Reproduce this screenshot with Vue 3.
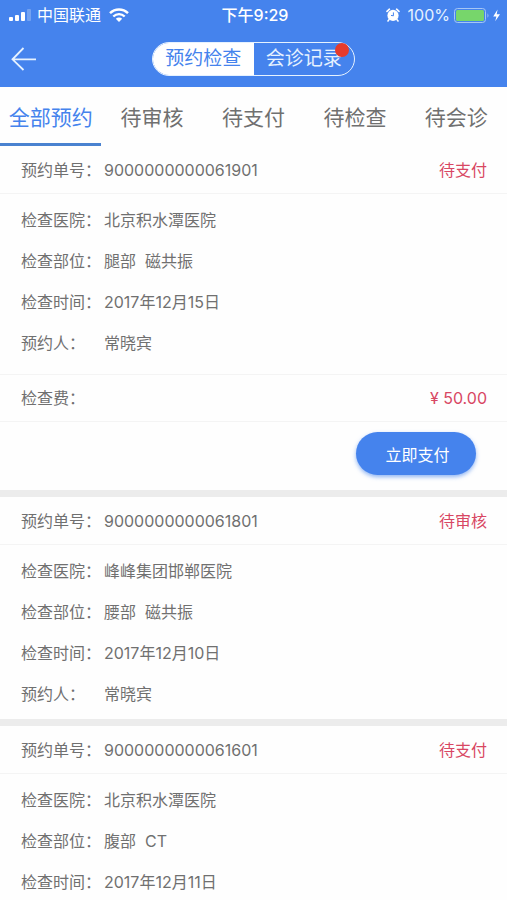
<script setup>
import { ref } from 'vue'

const view = ref('booking')
const activeTab = ref(0)
const tabs = ['全部预约', '待审核', '待支付', '待检查', '待会诊']

const orders = [
  {
    id: '9000000000061901',
    status: '待支付',
    fields: [
      ['检查医院：', '北京积水潭医院'],
      ['检查部位：', '腿部  磁共振'],
      ['检查时间：', '2017年12月15日'],
      ['预约人：', '常晓宾'],
    ],
    fee: '¥ 50.00',
  },
  {
    id: '9000000000061801',
    status: '待审核',
    fields: [
      ['检查医院：', '峰峰集团邯郸医院'],
      ['检查部位：', '腰部  磁共振'],
      ['检查时间：', '2017年12月10日'],
      ['预约人：', '常晓宾'],
    ],
  },
  {
    id: '9000000000061601',
    status: '待支付',
    fields: [
      ['检查医院：', '北京积水潭医院'],
      ['检查部位：', '腹部  CT'],
      ['检查时间：', '2017年12月11日'],
    ],
  },
]
</script>

<template>
  <div class="app">
    <header class="top">
      <div class="status">
        <div class="status-left">
          <svg class="signal" width="23" height="12" viewBox="0 0 23 12" aria-hidden="true">
            <rect x="0" y="8" width="4" height="4" rx="1" fill="#fff" />
            <rect x="6" y="6" width="4" height="6" rx="1" fill="#fff" />
            <rect x="12" y="3" width="4" height="9" rx="1" fill="#fff" />
            <rect x="18" y="0" width="4" height="12" rx="1" fill="#fff" opacity="0.25" />
          </svg>
          <span>中国联通</span>
          <svg class="wifi" width="20" height="14" viewBox="0 0 20 14" aria-hidden="true">
            <g fill="none" stroke="#fff" stroke-width="2.4">
              <path d="M1 5.2C6 .2 14 .2 19 5.2" />
              <path d="M4.3 8.5C7.6 5.3 12.4 5.3 15.7 8.5" />
            </g>
            <path d="M6.8 10.7C8.7 9 11.3 9 13.2 10.7L10 13.9Z" fill="#fff" />
          </svg>
        </div>
        <span class="clock">下午9:29</span>
        <div class="status-right">
          <svg width="14" height="14" viewBox="0 0 14 14" aria-hidden="true">
            <circle cx="7" cy="7.4" r="5.6" fill="#fff" />
            <path d="M1 3.4 3.4 1.2M13 3.4 10.6 1.2M3 11.6 2 13M11 11.6 12 13" stroke="#fff" stroke-width="1.6" stroke-linecap="round" />
            <path d="M7.4 4.4V7.8L5 7.4" fill="none" stroke="#4583ed" stroke-width="1" />
          </svg>
          <span class="percent">100%</span>
          <svg class="battery" width="47" height="15" viewBox="0 0 47 15" aria-hidden="true">
            <rect x="0.5" y="0.5" width="31" height="14" rx="3" fill="none" stroke="#a6c6f5" />
            <rect x="2" y="2" width="28" height="11" rx="1.5" fill="#77d66b" />
            <path d="M33.5 5.2Q35.4 7.5 33.5 9.8Z" fill="#a6c6f5" />
            <path d="M43.6 1.5 39.2 8.4H42.4L41.2 13.2 46 6.2H42.7Z" fill="#fff" />
          </svg>
        </div>
      </div>
      <nav class="bar">
        <button class="back" type="button" aria-label="返回">
          <svg width="26" height="24" viewBox="0 0 26 24" aria-hidden="true">
            <path d="M12.5 1 1.5 12.3 12.5 23M1.5 12.3H25" fill="none" stroke="#e6f2ff" stroke-width="1.8" />
          </svg>
        </button>
        <div class="switch">
          <button type="button" :class="{ on: view === 'booking' }" @click="view = 'booking'">预约检查</button>
          <button type="button" :class="{ on: view === 'records' }" @click="view = 'records'">
            会诊记录<i class="dot"></i>
          </button>
        </div>
      </nav>
    </header>

    <nav class="tabs">
      <button
        v-for="(tab, i) in tabs"
        :key="tab"
        type="button"
        :class="{ active: i === activeTab }"
        @click="activeTab = i"
      >{{ tab }}</button>
    </nav>

    <main class="list">
      <article v-for="order in orders" :key="order.id" class="card">
        <div class="row head">
          <span class="label">预约单号：</span>
          <span class="value">{{ order.id }}</span>
          <span class="accent">{{ order.status }}</span>
        </div>
        <div class="info">
          <div v-for="[label, value] in order.fields" :key="label" class="row field">
            <span class="label">{{ label }}</span>
            <span class="value">{{ value }}</span>
          </div>
        </div>
        <template v-if="order.fee">
          <div class="row fee">
            <span class="label">检查费：</span>
            <span class="accent">{{ order.fee }}</span>
          </div>
          <div class="actions">
            <button class="pay" type="button">立即支付</button>
          </div>
        </template>
      </article>
    </main>
  </div>
</template>

<style>
body {
  background: #fff;
}
</style>

<style scoped>
.app {
  display: flex;
  flex-direction: column;
  height: 100vh;
  overflow: hidden;
  background: #fefefe;
  color: #707070;
  font-family: Inter, "Noto Sans CJK SC", sans-serif;
  font-size: 16px;
  line-height: 24px;
}

button {
  margin: 0;
  padding: 0;
  border: 0;
  background: none;
  color: inherit;
  font: inherit;
  cursor: pointer;
}

svg {
  display: block;
  flex: none;
}

.top {
  flex: none;
  background: #4583ed;
  color: #fff;
}

.status {
  display: grid;
  grid-template-columns: 1fr auto 1fr;
  align-items: center;
  height: 30px;
  padding: 0 6px 0 9px;
}

.status-left,
.status-right {
  display: flex;
  align-items: center;
}

.status-right {
  justify-content: flex-end;
  color: #e6f2ff;
}

.signal {
  margin-right: 5px;
}

.wifi {
  margin-left: 8px;
}

.clock {
  font-weight: 500;
}

.percent {
  margin: 0 4px 0 8px;
}

.bar {
  display: grid;
  grid-template-columns: 1fr auto 1fr;
  align-items: center;
  height: 57px;
  padding: 0 11px;
}

.back {
  justify-self: start;
}

.switch {
  display: flex;
  width: 203px;
  height: 34px;
  box-sizing: border-box;
  border: 1px solid #e6f2ff;
  border-radius: 17px;
}

.switch button {
  position: relative;
  flex: 1;
  border-radius: 0 16px 16px 0;
  color: #e6f2ff;
  font-size: 19px;
}

.switch button:first-child {
  border-radius: 16px 0 0 16px;
}

.switch .on {
  background: #fff;
  color: #4583ed;
}

.dot {
  position: absolute;
  top: 0;
  right: 5px;
  width: 14px;
  height: 14px;
  border-radius: 50%;
  background: #e63b2c;
}

.tabs {
  display: flex;
  flex: none;
  height: 59px;
}

.tabs button {
  flex: 1;
  padding-top: 5px;
  border-bottom: 3px solid transparent;
  font-size: 21px;
  white-space: nowrap;
}

.tabs .active {
  border-color: #4a82d0;
  color: #4583ed;
}

.list {
  flex: 1;
  min-height: 0;
  overflow-y: auto;
  scrollbar-width: none;
}

.card + .card {
  border-top: 7px solid #ececec;
}

.row {
  display: flex;
  align-items: center;
  padding: 0 20px 0 21px;
}

.label {
  flex: none;
  width: 83px;
}

.value {
  white-space: pre;
}

.accent {
  margin-left: auto;
  color: #d84763;
}

.head,
.fee {
  height: 47px;
  border-bottom: 1px solid #f4f4f4;
}

.info {
  padding: 5px 0;
}

.field {
  height: 41px;
}

.fee {
  height: 46px;
  margin-top: 6px;
  border-top: 1px solid #f4f4f4;
}

.actions {
  display: flex;
  justify-content: flex-end;
  padding: 10px 31px 15px;
}

.pay {
  width: 120px;
  height: 43px;
  padding: 3px 0 0 3px;
  border-radius: 22px;
  background: #4583ed;
  box-shadow: 0 2px 4px #4583ed99;
  color: #fff;
}
</style>
